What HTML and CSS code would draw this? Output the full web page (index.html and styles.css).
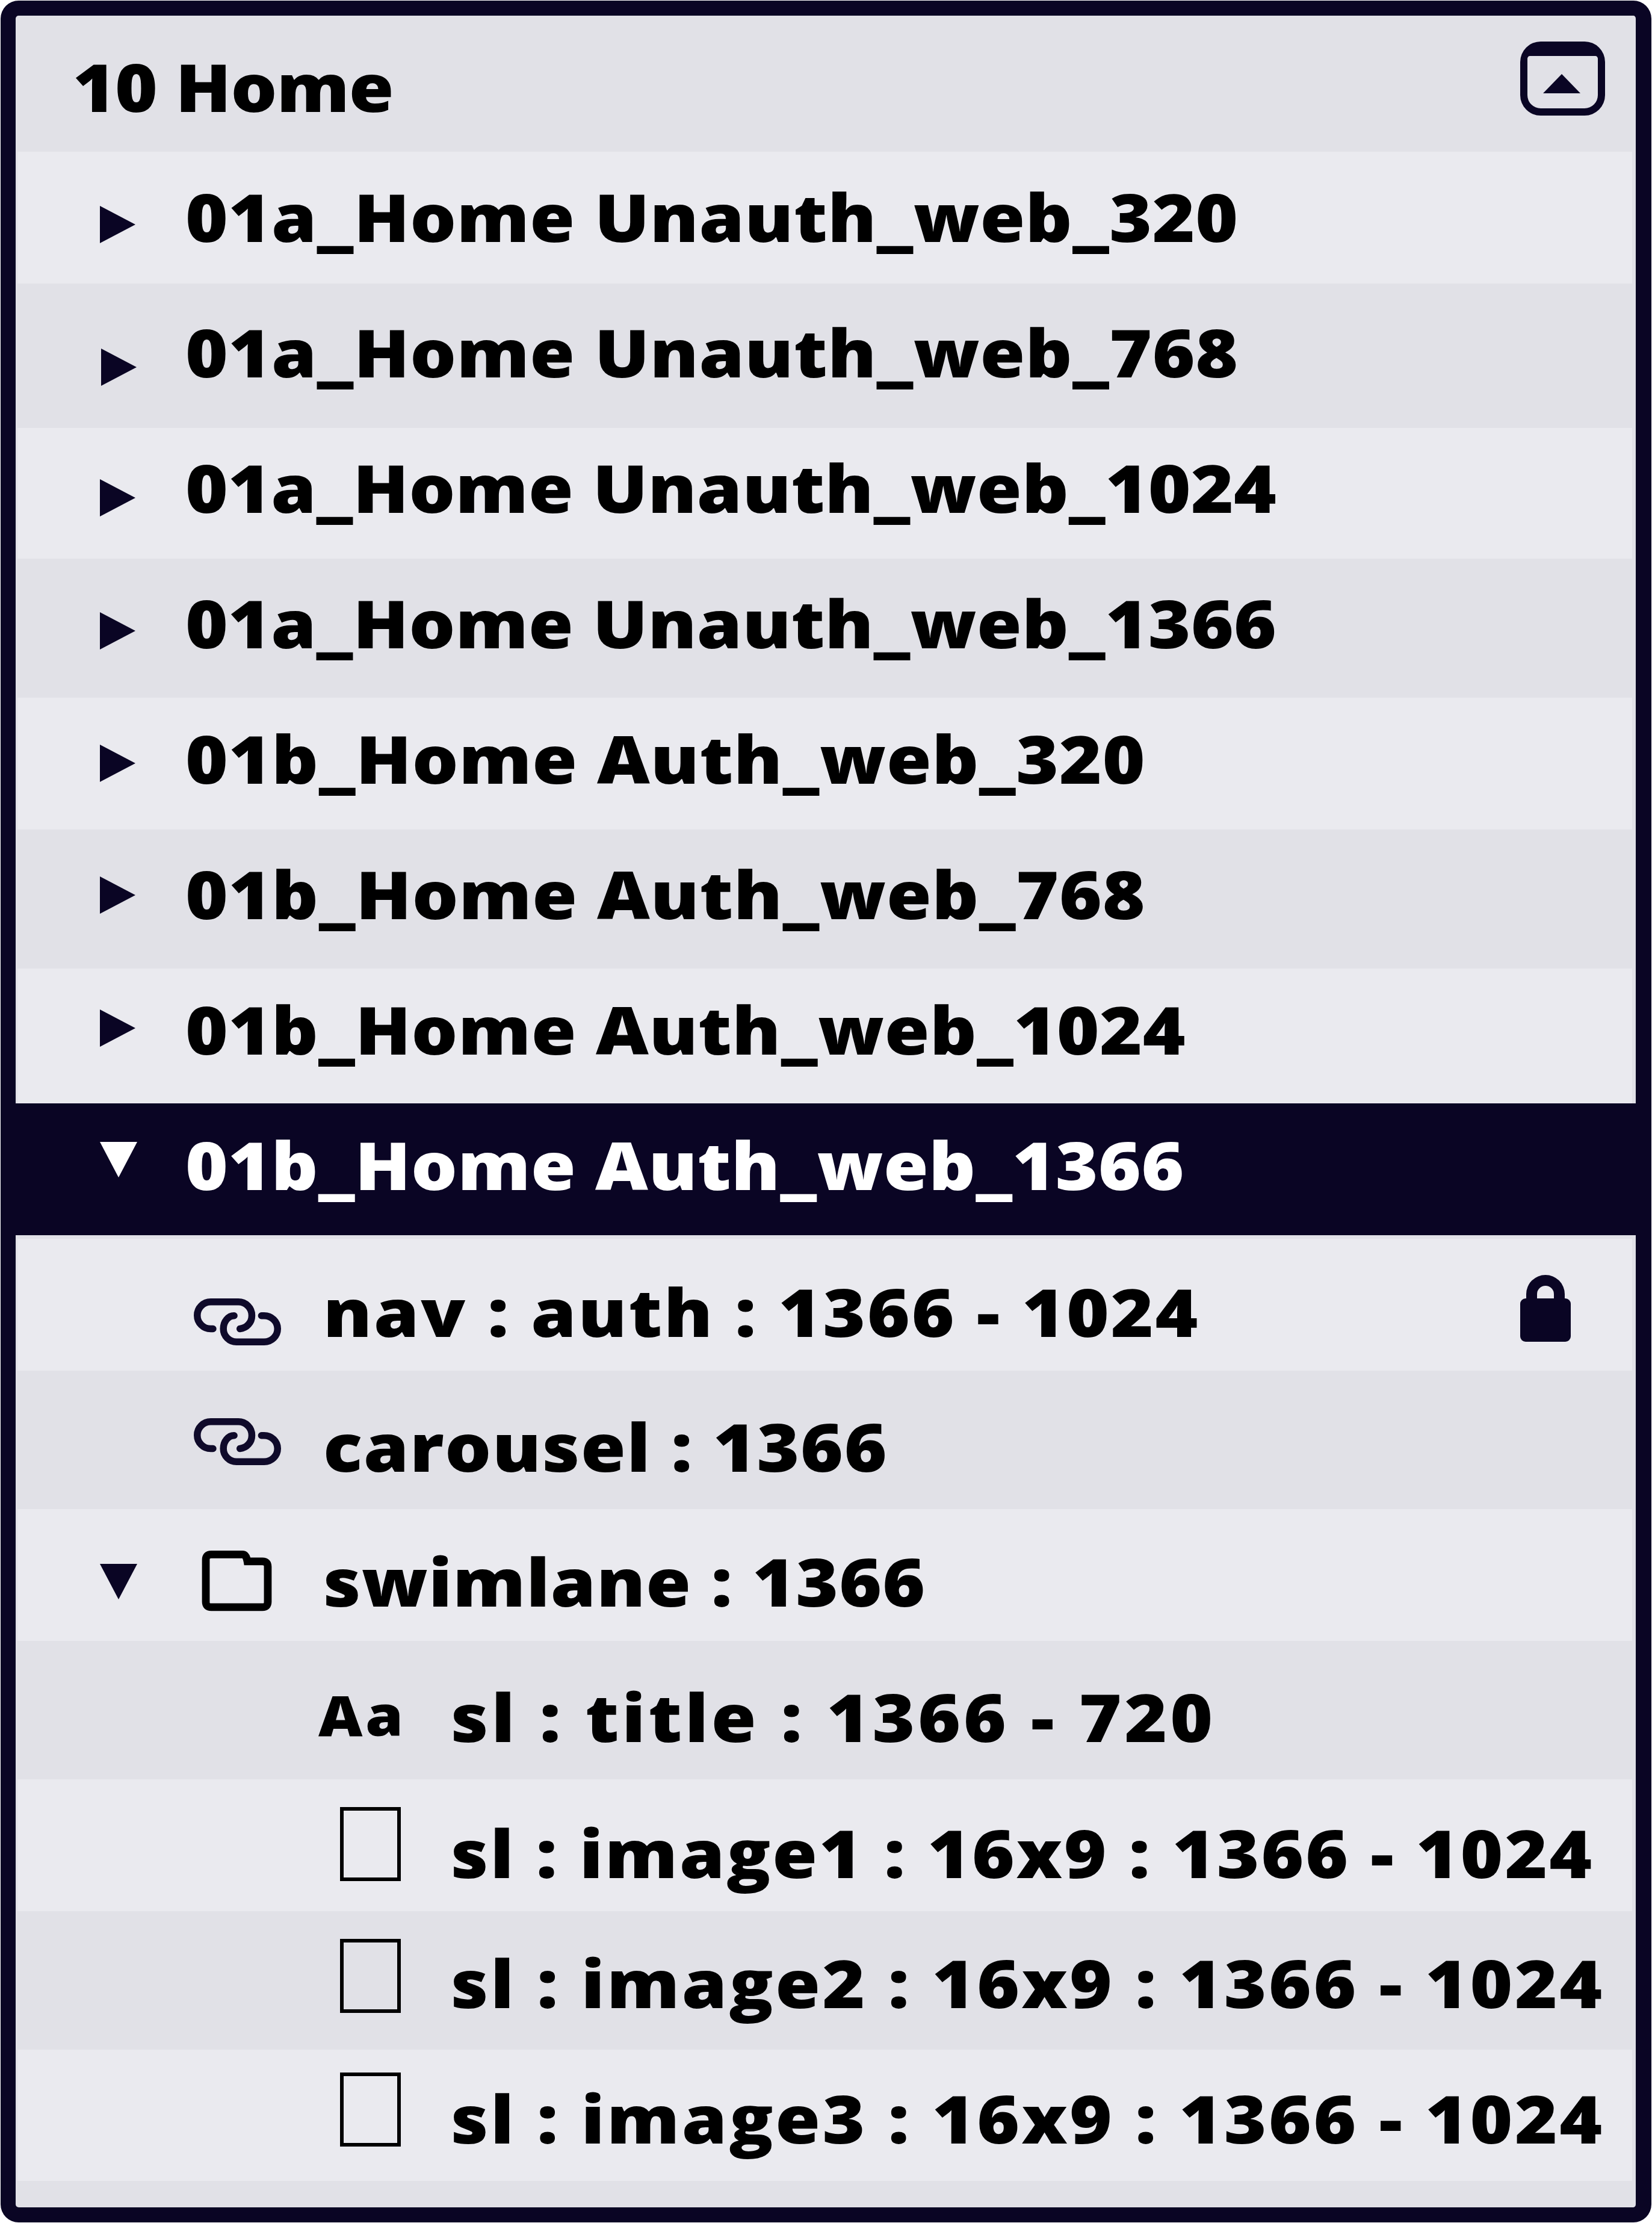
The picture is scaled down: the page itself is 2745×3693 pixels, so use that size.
FILE: index.html
```html
<!DOCTYPE html>
<html lang="en">
<head>
    <meta charset="UTF-8">
    <title>10 Home</title>
    <link rel="stylesheet" href="styles.css">
</head>
<body>
    <div class="panel">
        <div class="row header">
            <span class="label">10 Home</span>
            <svg class="collapse" viewBox="0 0 141 123">
                <path fill-rule="evenodd" fill="#0a0524" d="M34 0H107A34 34 0 0 1 141 34V89A34 34 0 0 1 107 123H34A34 34 0 0 1 0 89V34A34 34 0 0 1 34 0ZM16 24Q13 24 12 28V89A22 22 0 0 0 34 111H107A22 22 0 0 0 129 89V28Q128 24 125 24Z"/>
                <polygon points="38,86 69,54 100,86" fill="#0a0524"/>
            </svg>
        </div>

        <div class="row light r1"><i class="tri-right"></i><span class="label lvl1">01a_Home Unauth_web_320</span></div>
        <div class="row r2"><i class="tri-right shift"></i><span class="label lvl1-shift">01a_Home Unauth_web_768</span></div>
        <div class="row light r3"><i class="tri-right"></i><span class="label lvl1">01a_Home Unauth_web_1024</span></div>
        <div class="row r4"><i class="tri-right"></i><span class="label lvl1">01a_Home Unauth_web_1366</span></div>
        <div class="row light r5"><i class="tri-right"></i><span class="label lvl1">01b_Home Auth_web_320</span></div>
        <div class="row r6"><i class="tri-right"></i><span class="label lvl1">01b_Home Auth_web_768</span></div>
        <div class="row light r7"><i class="tri-right"></i><span class="label lvl1">01b_Home Auth_web_1024</span></div>
        <div class="row selected r8"><i class="tri-down"></i><span class="label lvl1-down">01b_Home Auth_web_1366</span></div>

        <div class="row light r9">
            <svg class="link" viewBox="0 0 227 122"><path d="M50 79H44A35 35 0 0 1 44 9H116A35 35 0 0 1 151 44V45A34 34 0 0 1 120 79M105 45A28 34 0 0 0 77 79A34 34 0 0 0 111 113H183A35 34 0 0 0 183 45H176"/></svg>
            <span class="label lvl2">nav : auth : 1366 - 1024</span>
            <svg class="lock" viewBox="0 0 84 111">
                <path d="M10 39V32A32 32 0 0 1 74 32V39H56V32A14 14 0 0 0 28 32V39Z" fill="#0a0524"/>
                <rect x="0" y="39" width="84" height="72" rx="9" fill="#0a0524"/>
            </svg>
        </div>
        <div class="row r10">
            <svg class="link" viewBox="0 0 227 122"><path d="M50 79H44A35 35 0 0 1 44 9H116A35 35 0 0 1 151 44V45A34 34 0 0 1 120 79M105 45A28 34 0 0 0 77 79A34 34 0 0 0 111 113H183A35 34 0 0 0 183 45H176"/></svg>
            <span class="label lvl2">carousel : 1366</span>
        </div>
        <div class="row light r11">
            <i class="tri-down dark"></i>
            <svg class="folder" viewBox="0 0 183 158"><path d="M11 133V24Q11 10 25 10H106Q116 10 119 28H158Q172 28 172 42V133Q172 147 158 147H25Q11 147 11 133Z"/></svg>
            <span class="label lvl2-folder">swimlane : 1366</span>
        </div>
        <div class="row r12"><span class="aa">Aa</span><span class="label lvl3-aa">sl : title : 1366 - 720</span></div>
        <div class="row light r13"><i class="image"></i><span class="label lvl3">sl : image1 : 16x9 : 1366 - 1024</span></div>
        <div class="row r14"><i class="image"></i><span class="label lvl3">sl : image2 : 16x9 : 1366 - 1024</span></div>
        <div class="row light r15"><i class="image"></i><span class="label lvl3">sl : image3 : 16x9 : 1366 - 1024</span></div>
    </div>
</body>
</html>
```

FILE: styles.css
```css
body {
    margin: 1px;
    background-color: #ffffff;
    font-family: "Open Sans", "Liberation Sans", Arial, sans-serif;
}

.panel {
    border: 25px solid #0a0524;
    border-right-width: 26px;
    border-radius: 30px;
    padding-bottom: 44px;
    background-color: #e1e1e7;
}

.row {
    display: flex;
    align-items: flex-start;
    margin: 0 6px 0 3px;
    padding-left: 137px;
    height: var(--row-h);
    box-sizing: border-box;
}

.light {
    background-color: #eaeaef;
}

/* the original face is wider than Open Sans, so stretch it a little */
.label {
    margin-top: calc(var(--text-top) - 5px);
    font-size: 110px;
    line-height: 110px;
    font-weight: 800;
    letter-spacing: var(--track, 0.5px);
    color: #000000;
    white-space: nowrap;
    transform: scaleX(1.1);
    transform-origin: left center;
}

/* text columns */
.lvl1 { margin-left: 83px; }
.lvl1-shift { margin-left: 81px; }
.lvl1-down { margin-left: 80px; }
.lvl2 { margin-left: 70px; }
.lvl2-folder { margin-left: 85px; }
.lvl3-aa { margin-left: 83px; }
.lvl3 { margin-left: 83px; }

/* rows: height, text offset, icon offset */
.header { --row-h: 226px; --text-top: 67px; --track: -0.8px; margin: 0; padding: 0 51px 0 95px; background: none; }
.r1 { --row-h: 219px; --text-top: 57px; --icon-top: 90px; }
.r2 { --row-h: 240px; --text-top: 63px; --icon-top: 108px; }
.r3 { --row-h: 217px; --text-top: 48px; --icon-top: 85px; --track: 0.2px; }
.r4 { --row-h: 231px; --text-top: 56px; --icon-top: 89px; --track: 0.2px; }
.r5 { --row-h: 219px; --text-top: 50px; --icon-top: 78px; --track: 0.7px; }
.r6 { --row-h: 231px; --text-top: 56px; --icon-top: 78px; --track: 0.7px; }
.r7 { --row-h: 224px; --text-top: 50px; --icon-top: 68px; }
.r8 { --row-h: 219px; --text-top: 51px; --icon-top: 64px; --track: 0.4px; }
.r9 { --row-h: 219px; --text-top: 70px; --icon-top: 99px; --track: 2.6px; margin-top: 6px; padding-right: 102px; }
.r10 { --row-h: 230px; --text-top: 75px; --icon-top: 79px; --track: 1.5px; }
.r11 { --row-h: 219px; --text-top: 69px; --icon-top: 91px; --track: 1px; }
.r12 { --row-h: 230px; --text-top: 75px; --track: 4.4px; }
.r13 { --row-h: 219px; --text-top: 71px; --icon-top: 46px; --track: 2.6px; }
.r14 { --row-h: 230px; --text-top: 68px; --icon-top: 46px; --track: 3.1px; }
.r15 { --row-h: 218px; --text-top: 63px; --icon-top: 38px; --track: 3.1px; }

.selected {
    margin: 0;
    padding-left: 140px;
    background-color: #0a0524;
}

.selected .label {
    color: #ffffff;
}

/* icons */
.tri-right {
    flex: none;
    margin-top: var(--icon-top);
    width: 59px;
    height: 62px;
    background-color: #0a0524;
    clip-path: polygon(0 0, 100% 50%, 0 100%);
}

.tri-right.shift {
    margin-left: 2px;
}

.tri-down {
    flex: none;
    margin-top: var(--icon-top);
    width: 62px;
    height: 59px;
    background-color: #ffffff;
    clip-path: polygon(0 0, 100% 0, 50% 100%);
}

.tri-down.dark {
    background-color: #0a0524;
}

.collapse {
    flex: none;
    margin-top: 43px;
    margin-left: auto;
    width: 141px;
    height: 123px;
}

.link {
    flex: none;
    margin-top: var(--icon-top);
    margin-left: 156px;
    width: 145px;
    height: 78px;
    fill: none;
    stroke: #0f0a2a;
    stroke-width: 18;
    stroke-linecap: round;
}

.lock {
    flex: none;
    margin-top: 60px;
    margin-left: auto;
    width: 84px;
    height: 111px;
}

.folder {
    flex: none;
    margin-top: 69px;
    margin-left: 107px;
    width: 117px;
    height: 101px;
    fill: none;
    stroke: #000000;
    stroke-width: 20;
}

.aa {
    flex: none;
    margin-top: 77px;
    margin-left: 363px;
    width: 137px;
    font-size: 92px;
    line-height: 92px;
    font-weight: 800;
    letter-spacing: 4px;
    color: #000000;
    transform: scaleX(1.1);
    transform-origin: left center;
}

.image {
    flex: none;
    margin-top: var(--icon-top);
    margin-left: 399px;
    width: 101px;
    height: 123px;
    border: 6px solid #000000;
    box-sizing: border-box;
}
```
